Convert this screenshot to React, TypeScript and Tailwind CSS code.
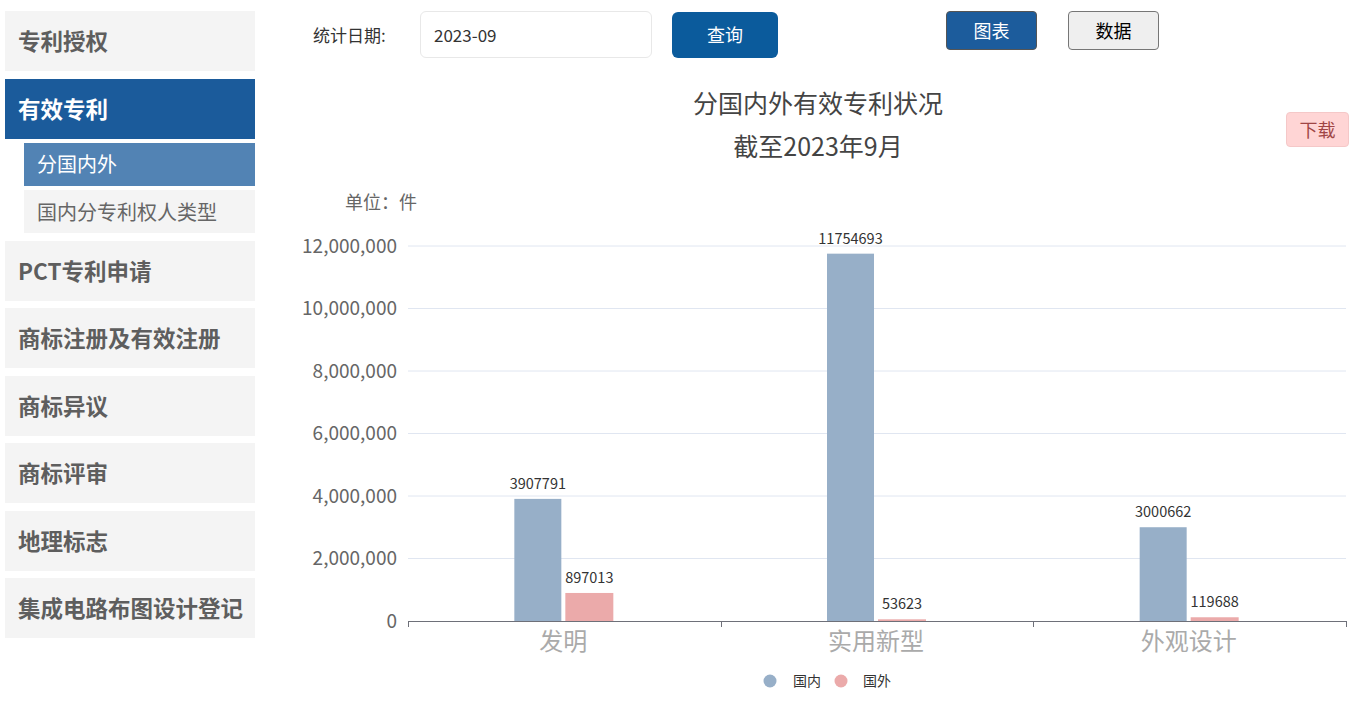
import React from "react";

const FONT = '"Microsoft YaHei", "Noto Sans CJK SC", "Noto Sans", sans-serif';

const mainItemsTop = ["专利授权"];
const mainItemsBottom = ["PCT专利申请", "商标注册及有效注册", "商标异议", "商标评审", "地理标志", "集成电路布图设计登记"];

const data = [
  { name: "发明", a: 3907791, b: 897013 },
  { name: "实用新型", a: 11754693, b: 53623 },
  { name: "外观设计", a: 3000662, b: 119688 },
];

function Chart() {
  const x0 = 408;
  const x1 = 1346;
  const y0 = 621;
  const yTop = 246;
  const max = 12000000;
  const scale = (y0 - yTop) / max;
  const cw = (x1 - x0) / 3;
  const ticks = [0, 2000000, 4000000, 6000000, 8000000, 10000000, 12000000];
  const fmt = (n: number) => n.toLocaleString("en-US");
  return (
    <svg width={1082} height={529} className="block" style={{ fontFamily: FONT }}>
      <g transform="translate(-290,-180)">
        <text x={345} y={209} fontSize={18} fill="#666">单位：件</text>
        {ticks.map((t) => {
          const y = y0 - t * scale;
          return (
            <g key={t}>
              {t !== 0 && <line x1={x0} x2={x1} y1={y} y2={y} stroke="#E0E6F1" strokeWidth={1} />}
              <text x={397} y={y + 6.5} fontSize={19} fill="#666" textAnchor="end">{fmt(t)}</text>
            </g>
          );
        })}
        {data.map((d, i) => {
          const c = x0 + cw * (i + 0.5);
          const ha = d.a * scale;
          const hb = d.b * scale;
          return (
            <g key={d.name}>
              <rect x={c - 50} y={y0 - ha} width={47} height={ha} fill="#97AFC8" />
              <rect x={c + 1} y={y0 - hb} width={48} height={hb} fill="#EBAAAA" />
              <text x={c - 26.5} y={y0 - ha - 10} fontSize={14.5} fill="#333" textAnchor="middle">{d.a}</text>
              <text x={c + 25} y={y0 - hb - 10} fontSize={14.5} fill="#333" textAnchor="middle">{d.b}</text>
              <text x={c - 1} y={650} fontSize={24} fill="#AAAAAA" textAnchor="middle">{d.name}</text>
            </g>
          );
        })}
        <line x1={x0} x2={x1} y1={y0 + 0.5} y2={y0 + 0.5} stroke="#6E7079" strokeWidth={1} />
        {[0, 1, 2, 3].map((i) => {
          const x = Math.round(x0 + cw * i) + 0.5;
          return <line key={i} x1={x} x2={x} y1={y0} y2={y0 + 6} stroke="#6E7079" strokeWidth={1} />;
        })}
        <circle cx={770} cy={681} r={6.5} fill="#97AFC8" />
        <text x={793} y={686} fontSize={14} fill="#333">国内</text>
        <circle cx={841} cy={681} r={6.5} fill="#EBAAAA" />
        <text x={863} y={686} fontSize={14} fill="#333">国外</text>
      </g>
    </svg>
  );
}

function MainItem({ label, active }: { label: string; active?: boolean }) {
  return (
    <div
      className={`h-[60px] mb-[7.5px] flex items-center pl-[13px] text-[22.5px] font-bold ${
        active ? "bg-[#1B5B9B] text-white" : "bg-[#F4F4F4] text-[#5E5E5E]"
      }`}
    >
      {label}
    </div>
  );
}

export default function App() {
  return (
    <div className="flex w-[1372px] h-[709px] bg-white overflow-hidden" style={{ fontFamily: FONT }}>
      <div className="w-[255px] pl-[5px] pt-[11px] shrink-0">
        {mainItemsTop.map((m) => (
          <MainItem key={m} label={m} />
        ))}
        <div className="h-[60px] flex items-center pl-[13px] text-[22.5px] font-bold bg-[#1B5B9B] text-white">有效专利</div>
        <div className="ml-[19px] mt-[4px] mb-[7.5px] flex flex-col gap-[4.5px]">
          <div className="h-[43px] flex items-center pl-[13px] text-[20px] bg-[#5283B4] text-white">分国内外</div>
          <div className="h-[43px] flex items-center pl-[13px] text-[20px] bg-[#F4F4F4] text-[#666]">国内分专利权人类型</div>
        </div>
        {mainItemsBottom.map((m) => (
          <MainItem key={m} label={m} />
        ))}
      </div>
      <div className="flex-1 flex flex-col">
        <div className="flex items-center pt-[11px] pl-[58px] box-content" style={{ height: 47 }}>
          <span className="text-[17px] text-[#333] w-[107px]">统计日期:</span>
          <div className="w-[232px] h-[47px] border border-[#E8E8E8] rounded-[6px] flex items-center pl-[13px] text-[17px] text-[#333]">
            2023-09
          </div>
          <button className="ml-[20px] w-[106px] h-[46px] rounded-[6px] bg-[#0B5B9C] text-white text-[18px]">查询</button>
          <div className="ml-[168px] self-start flex gap-[31px]">
            <button className="w-[91px] h-[39px] rounded-[4px] bg-[#1C5C9C] border border-[#555] text-white text-[18px]">图表</button>
            <button className="w-[91px] h-[39px] rounded-[4px] bg-[#EFEFEF] border border-[#767676] text-black text-[18px]">数据</button>
          </div>
        </div>
        <div className="relative ml-[35px] w-[1056px] mt-[23px] text-center text-[25px] leading-[43px] text-[#444]">
          <div>分国内外有效专利状况</div>
          <div>截至2023年9月</div>
          <button className="absolute right-[-3px] top-[31px] w-[63px] h-[35px] rounded-[4px] bg-[#FFD5D5] border border-[#F5C8C8] text-[#A04545] text-[18px] leading-[33px]">
            下载
          </button>
        </div>
        <div className="ml-[35px] mt-[13px]">
          <Chart />
        </div>
      </div>
    </div>
  );
}
